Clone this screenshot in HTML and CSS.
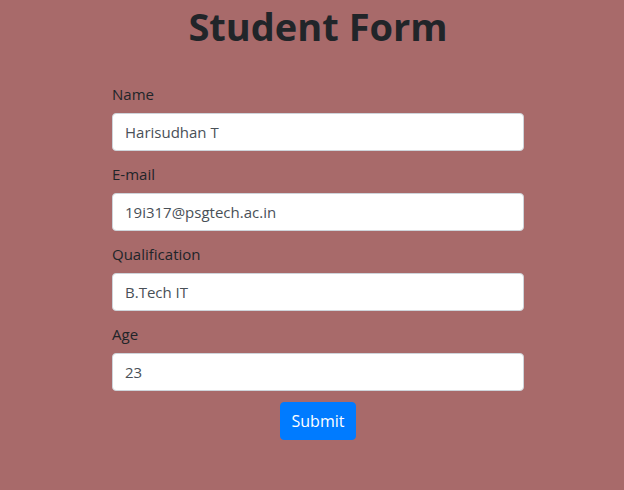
FILE: index.html
```html
<!DOCTYPE html>
<html>
<head>
<meta charset="utf-8">
<link rel="stylesheet" href="styles.css">
</head>
<body>
<main class="page">
<h1 class="title">Student Form</h1>
<form class="form">
  <div class="group">
    <label class="label">Name</label>
    <input class="input" type="text" value="Harisudhan T">
  </div>
  <div class="group">
    <label class="label">E-mail</label>
    <input class="input" type="text" value="19i317@psgtech.ac.in">
  </div>
  <div class="group">
    <label class="label">Qualification</label>
    <input class="input" type="text" value="B.Tech IT">
  </div>
  <div class="group">
    <label class="label">Age</label>
    <input class="input" type="text" value="23">
  </div>
  <div class="actions">
    <button class="btn" type="button">Submit</button>
  </div>
</form>
</main>
</body>
</html>
```
FILE: styles.css
```css
html, body {
  margin: 0;
  padding: 0;
}
body {
  background: #a86a6a;
  font-family: "Open Sans", "Noto Sans", sans-serif;
  color: #212529;
  height: 490px;
  overflow: hidden;
}
.page {
  width: 412px;
  margin-left: 112px;
  display: flex;
  flex-direction: column;
}
.title {
  margin: 0;
  padding-top: 2px;
  text-align: center;
  font-size: 38px;
  line-height: 48px;
  font-weight: 700;
  color: #212529;
}
.form {
  margin-top: 32px;
  display: flex;
  flex-direction: column;
}
.group {
  display: flex;
  flex-direction: column;
  margin-bottom: 11px;
}
.label {
  font-size: 15px;
  line-height: 24px;
  margin-bottom: 7px;
}
.input {
  box-sizing: border-box;
  height: 38px;
  padding: 6px 12px;
  font-family: inherit;
  font-size: 15px;
  color: #495057;
  background: #fff;
  border: 1px solid #ced4da;
  border-radius: 4px;
  outline: none;
}
.actions {
  display: flex;
  justify-content: center;
}
.btn {
  box-sizing: border-box;
  height: 38px;
  width: 76px;
  padding: 0;
  font-family: inherit;
  font-size: 16px;
  color: #fff;
  background: #007bff;
  border: 1px solid #007bff;
  border-radius: 4px;
}
```
